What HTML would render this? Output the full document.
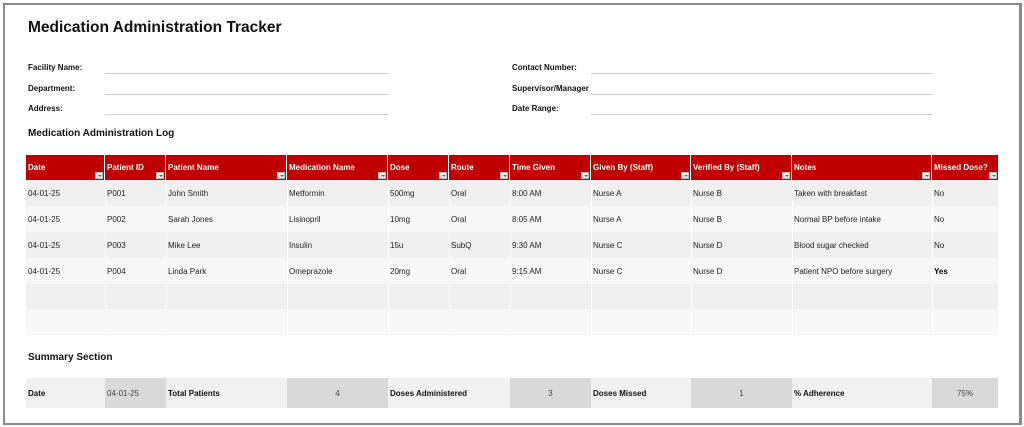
<!DOCTYPE html>
<html><head><style>
body{margin:0;width:1024px;height:427px;background:#fff;font-family:"Liberation Sans",sans-serif;position:relative;overflow:hidden;color:#111}
.frame{position:absolute;left:3px;top:3px;width:1014px;height:418px;border:2px solid #8a8a8a;border-right-width:3px}
.a{position:absolute;white-space:nowrap}
.lbl{font-size:8px;font-weight:bold}
.ln{position:absolute;height:1px;background:#ccc}
.h{position:absolute;top:155px;height:25px;background:#c00000;color:#fff;font-size:8px;font-weight:bold;border-right:1px solid #fff;box-sizing:border-box;padding:8px 0 0 2px;white-space:nowrap}
.h i{position:absolute;right:1px;bottom:1px;width:8px;height:7px;background:#eee;border:1px solid #bbb;box-sizing:border-box}
.h i:after{content:"";position:absolute;left:1.5px;top:2px;border-left:2px solid transparent;border-right:2px solid transparent;border-top:2px solid #666}
.r{position:absolute;left:26px;width:972px;height:26px}
.c{position:absolute;font-size:8px;color:#222;top:9px;white-space:nowrap}
.vl{position:absolute;top:180px;height:155px;width:1px;background:#fff}
.s{position:absolute;top:378px;height:30px;font-size:8px;box-sizing:border-box;padding-top:11px;white-space:nowrap}
</style></head><body>
<div class="frame"></div>
<div class="a" style="left:28px;top:19px;font-size:15.5px;font-weight:bold">Medication Administration Tracker</div>
<div class="a lbl" style="left:28px;top:63px">Facility Name:</div>
<div class="a lbl" style="left:28px;top:84px">Department:</div>
<div class="a lbl" style="left:28px;top:104px">Address:</div>
<div class="ln" style="left:105px;width:283px;top:73px"></div>
<div class="ln" style="left:105px;width:283px;top:94px"></div>
<div class="ln" style="left:105px;width:283px;top:114px"></div>
<div class="a lbl" style="left:512px;top:63px">Contact Number:</div>
<div class="a lbl" style="left:512px;top:84px">Supervisor/Manager</div>
<div class="a lbl" style="left:512px;top:104px">Date Range:</div>
<div class="ln" style="left:591px;width:341px;top:73px"></div>
<div class="ln" style="left:591px;width:341px;top:94px"></div>
<div class="ln" style="left:591px;width:341px;top:114px"></div>
<div class="a" style="left:28px;top:128px;font-size:10px;font-weight:bold">Medication Administration Log</div>

<div class="h" style="left:26px;width:79px">Date<i></i></div>
<div class="h" style="left:105px;width:61px">Patient ID<i></i></div>
<div class="h" style="left:166px;width:121px">Patient Name<i></i></div>
<div class="h" style="left:287px;width:101px">Medication Name<i></i></div>
<div class="h" style="left:388px;width:61px">Dose<i></i></div>
<div class="h" style="left:449px;width:61px">Route<i></i></div>
<div class="h" style="left:510px;width:81px">Time Given<i></i></div>
<div class="h" style="left:591px;width:100px">Given By (Staff)<i></i></div>
<div class="h" style="left:691px;width:101px">Verified By (Staff)<i></i></div>
<div class="h" style="left:792px;width:140px">Notes<i></i></div>
<div class="h" style="left:932px;width:66px;border-right:0">Missed Dose?<i></i></div>

<div class="r" style="top:180px;background:#efefef"></div>
<div class="r" style="top:206px;background:#f7f7f7"></div>
<div class="r" style="top:232px;background:#efefef"></div>
<div class="r" style="top:258px;background:#f7f7f7"></div>
<div class="r" style="top:284px;height:25px;background:#efefef"></div>
<div class="r" style="top:309px;background:#f7f7f7"></div>
<div class="vl" style="left:105px"></div><div class="vl" style="left:166px"></div><div class="vl" style="left:287px"></div><div class="vl" style="left:388px"></div><div class="vl" style="left:449px"></div><div class="vl" style="left:510px"></div><div class="vl" style="left:591px"></div><div class="vl" style="left:691px"></div><div class="vl" style="left:792px"></div><div class="vl" style="left:932px"></div>

<div style="position:absolute;left:0;top:180px">
<div style="position:absolute;top:0"><span class="c" style="left:28px">04-01-25</span><span class="c" style="left:107px">P001</span><span class="c" style="left:168px">John Smith</span><span class="c" style="left:289px">Metformin</span><span class="c" style="left:390px">500mg</span><span class="c" style="left:451px">Oral</span><span class="c" style="left:512px">8:00 AM</span><span class="c" style="left:593px">Nurse A</span><span class="c" style="left:693px">Nurse B</span><span class="c" style="left:794px">Taken with breakfast</span><span class="c" style="left:934px">No</span></div>
<div style="position:absolute;top:26px"><span class="c" style="left:28px">04-01-25</span><span class="c" style="left:107px">P002</span><span class="c" style="left:168px">Sarah Jones</span><span class="c" style="left:289px">Lisinopril</span><span class="c" style="left:390px">10mg</span><span class="c" style="left:451px">Oral</span><span class="c" style="left:512px">8:05 AM</span><span class="c" style="left:593px">Nurse A</span><span class="c" style="left:693px">Nurse B</span><span class="c" style="left:794px">Normal BP before intake</span><span class="c" style="left:934px">No</span></div>
<div style="position:absolute;top:52px"><span class="c" style="left:28px">04-01-25</span><span class="c" style="left:107px">P003</span><span class="c" style="left:168px">Mike Lee</span><span class="c" style="left:289px">Insulin</span><span class="c" style="left:390px">15u</span><span class="c" style="left:451px">SubQ</span><span class="c" style="left:512px">9:30 AM</span><span class="c" style="left:593px">Nurse C</span><span class="c" style="left:693px">Nurse D</span><span class="c" style="left:794px">Blood sugar checked</span><span class="c" style="left:934px">No</span></div>
<div style="position:absolute;top:78px"><span class="c" style="left:28px">04-01-25</span><span class="c" style="left:107px">P004</span><span class="c" style="left:168px">Linda Park</span><span class="c" style="left:289px">Omeprazole</span><span class="c" style="left:390px">20mg</span><span class="c" style="left:451px">Oral</span><span class="c" style="left:512px">9:15 AM</span><span class="c" style="left:593px">Nurse C</span><span class="c" style="left:693px">Nurse D</span><span class="c" style="left:794px">Patient NPO before surgery</span><span class="c" style="left:934px;font-weight:bold;color:#000">Yes</span></div>
</div>

<div class="a" style="left:28px;top:352px;font-size:10px;font-weight:bold">Summary Section</div>
<div class="s" style="left:26px;width:79px;background:#f0f0f0;padding-left:2px;font-weight:bold">Date</div>
<div class="s" style="left:105px;width:61px;background:#d9d9d9;padding-left:2px;color:#444">04-01-25</div>
<div class="s" style="left:166px;width:121px;background:#f0f0f0;padding-left:2px;font-weight:bold">Total Patients</div>
<div class="s" style="left:287px;width:101px;background:#d9d9d9;text-align:center;color:#444">4</div>
<div class="s" style="left:388px;width:122px;background:#f0f0f0;padding-left:2px;font-weight:bold">Doses Administered</div>
<div class="s" style="left:510px;width:81px;background:#d9d9d9;text-align:center;color:#444">3</div>
<div class="s" style="left:591px;width:100px;background:#f0f0f0;padding-left:2px;font-weight:bold">Doses Missed</div>
<div class="s" style="left:691px;width:101px;background:#d9d9d9;text-align:center;color:#444">1</div>
<div class="s" style="left:792px;width:140px;background:#f0f0f0;padding-left:2px;font-weight:bold">% Adherence</div>
<div class="s" style="left:932px;width:66px;background:#d9d9d9;text-align:center;color:#444">75%</div>
</body></html>
